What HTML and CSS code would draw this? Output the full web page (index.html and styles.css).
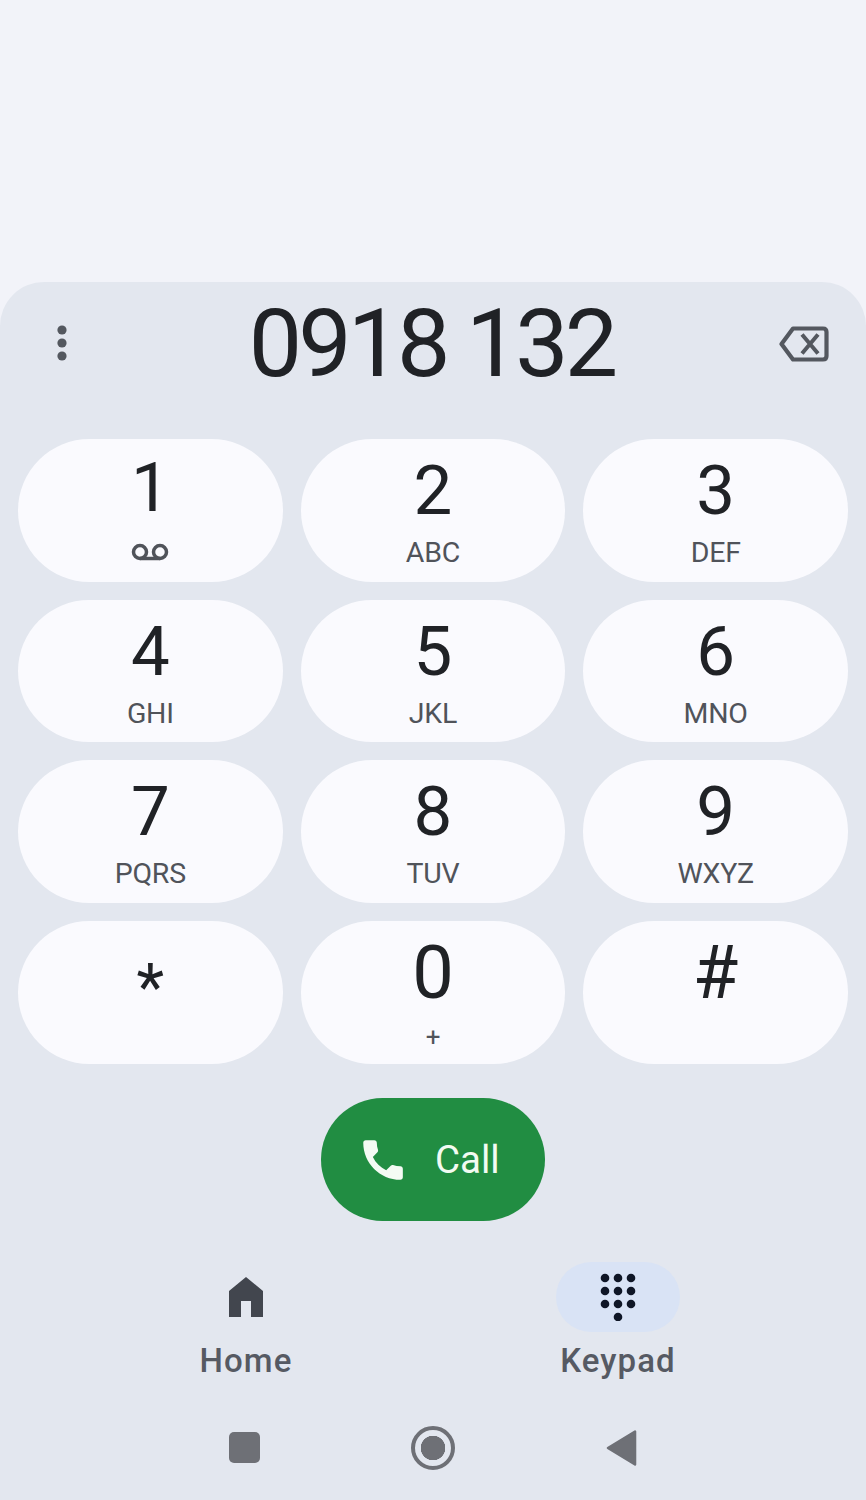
FILE: index.html
```html
<!DOCTYPE html>
<html lang="en">
<head>
<meta charset="utf-8">
<title>Phone keypad</title>
<link rel="stylesheet" href="styles.css">
</head>
<body>
<main class="panel">
  <header class="dial-head">
    <svg class="more" viewBox="0 0 12 40" aria-hidden="true"><circle cx="6" cy="6" r="4.600"/><circle cx="6" cy="19" r="4.600"/><circle cx="6" cy="32" r="4.600"/></svg>
    <div class="number">0918 132</div>
    <svg class="erase" viewBox="0 0 50 36" aria-hidden="true"><path d="M14 2.500H44Q47.500 2.500 47.500 6V30Q47.500 33.500 44 33.500H14L2.500 18Z" fill="none" stroke-width="4.200" stroke-linejoin="round"/><path d="M23 8.500L39 27.500M39 8.500L23 27.500" fill="none" stroke-width="4"/></svg>
  </header>
  <section class="keys">
    <button class="key"><span class="digit one">1</span><svg class="vm" viewBox="0 0 38 18" aria-hidden="true"><circle cx="9" cy="9" r="6.500"/><circle cx="29" cy="9" r="6.500"/><path d="M9 15.500H29"/></svg></button>
    <button class="key"><span class="digit">2</span><span class="sub">ABC</span></button>
    <button class="key"><span class="digit">3</span><span class="sub">DEF</span></button>
    <button class="key"><span class="digit">4</span><span class="sub">GHI</span></button>
    <button class="key"><span class="digit">5</span><span class="sub">JKL</span></button>
    <button class="key"><span class="digit">6</span><span class="sub">MNO</span></button>
    <button class="key"><span class="digit">7</span><span class="sub">PQRS</span></button>
    <button class="key"><span class="digit">8</span><span class="sub">TUV</span></button>
    <button class="key"><span class="digit">9</span><span class="sub">WXYZ</span></button>
    <button class="key"><span class="digit star">*</span></button>
    <button class="key"><span class="digit zero">0</span><span class="sub plus">+</span></button>
    <button class="key"><span class="digit hash">#</span></button>
  </section>
  <div class="call-row">
    <button class="call">
      <svg class="phone" viewBox="0 0 24 24" aria-hidden="true"><path d="M3 4.200C3 3.500 3.500 3 4.200 3H8.300C9 3 9.500 3.500 9.500 4.100C9.500 5.400 9.700 6.600 10.100 7.700C10.200 8.100 10.100 8.500 9.800 8.800L7.600 11C9 13.800 11.200 16 14 17.400L16.200 15.200C16.500 14.900 16.900 14.800 17.300 14.900C18.400 15.300 19.600 15.500 20.900 15.500C21.500 15.500 22 16 22 16.700V20.800C22 21.500 21.500 22 20.800 22C11 22 3 14 3 4.200Z"/></svg>
      <span>Call</span>
    </button>
  </div>
  <nav class="tabs">
    <div class="tab">
      <span class="tab-icon"><svg class="home" viewBox="0 0 34 40" aria-hidden="true"><path d="M17 0L34 14V40H22V24H12V40H0V14Z"/></svg></span>
      <span class="tab-label">Home</span>
    </div>
    <div class="tab">
      <span class="tab-icon active"><svg class="pad" viewBox="0 0 38 48" aria-hidden="true"><circle cx="6" cy="5" r="4.300"/><circle cx="19" cy="5" r="4.300"/><circle cx="32" cy="5" r="4.300"/><circle cx="6" cy="18" r="4.300"/><circle cx="19" cy="18" r="4.300"/><circle cx="32" cy="18" r="4.300"/><circle cx="6" cy="31" r="4.300"/><circle cx="19" cy="31" r="4.300"/><circle cx="32" cy="31" r="4.300"/><circle cx="19" cy="44" r="4.300"/></svg></span>
      <span class="tab-label">Keypad</span>
    </div>
  </nav>
  <footer class="sysbar">
    <span class="sys-square"></span>
    <span class="sys-home"></span>
    <svg class="sys-back" viewBox="0 0 32 38" aria-hidden="true"><path d="M30 2V36L2 19Z" stroke-width="2.500" stroke-linejoin="round"/></svg>
  </footer>
</main>
</body>
</html>
```
FILE: styles.css
```css
* { box-sizing: border-box; }
html, body { margin: 0; height: 100%; }
body {
  width: 866px;
  height: 1500px;
  overflow: hidden;
  padding-top: 282px;
  background: #f2f3f9;
  font-family: Roboto, "Liberation Sans", sans-serif;
}
.panel {
  height: 1218px;
  background: #e3e7ef;
  border-radius: 44px 44px 0 0;
  display: flex;
  flex-direction: column;
}
.dial-head {
  height: 157px;
  padding: 0 37px 33px 55px;
  display: flex;
  align-items: center;
  justify-content: space-between;
}
.more { width: 14px; height: 40px; fill: #54585f; }
.number {
  font-size: 95px;
  line-height: 110px;
  letter-spacing: -4px;
  color: #202226;
  padding-left: 15px;
}
.erase { width: 50px; height: 36px; stroke: #54585f; }
.keys {
  padding: 0 18px;
  display: grid;
  grid-template-columns: repeat(3, 1fr);
  grid-template-rows: repeat(4, 142.700px);
  column-gap: 18px;
  row-gap: 18px;
}
.key {
  border: 0;
  padding: 11px 0 0;
  background: #fafafe;
  border-radius: 72px;
  font-family: inherit;
  display: flex;
  flex-direction: column;
  align-items: center;
}
.digit {
  font-size: 69px;
  line-height: 82px;
  color: #202226;
}
.one { margin-top: -3px; }
.sub {
  margin-top: 4px;
  font-size: 28.500px;
  line-height: 34px;
  color: #50535a;
  letter-spacing: -0.200px;
}
.star { padding-top: 15px; font-size: 64px; }
.zero { font-size: 74px; }
.hash { font-size: 74px; }
.plus { font-size: 26px; margin-top: 6px; }
.vm { width: 38px; height: 18px; margin-top: 14px; fill: none; stroke: #50535a; stroke-width: 3.500; }
.call-row { display: flex; justify-content: center; padding-top: 34px; }
.call {
  width: 224px;
  height: 123px;
  border: 0;
  border-radius: 62px;
  background: #218d42;
  color: #f2fbf2;
  font-family: inherit;
  font-size: 38.500px;
  display: flex;
  align-items: center;
  padding: 0 0 0 36px;
  gap: 28px;
}
.phone { width: 50px; height: 50px; fill: #f4fbf4; }
.tabs {
  display: flex;
  padding: 41px 0 0 126px;
  gap: 132px;
}
.tab { width: 240px; display: flex; flex-direction: column; align-items: center; gap: 9px; }
.tab-icon {
  width: 124px;
  height: 70px;
  border-radius: 35px;
  display: flex;
  align-items: center;
  justify-content: center;
}
.tab-icon.active { background: #d9e3f5; }
.home { width: 36px; height: 40px; fill: #42464e; }
.pad { width: 38px; height: 48px; fill: #0f1626; }
.tab-label { font-size: 33px; line-height: 40px; font-weight: 500; letter-spacing: 1.100px; color: #565a63; }
.sysbar {
  display: flex;
  align-items: center;
  justify-content: center;
  gap: 151px;
  padding-top: 45px;
}
.sys-square { width: 31px; height: 31px; border-radius: 5px; background: #6e7076; }
.sys-home {
  width: 44px;
  height: 44px;
  border-radius: 50%;
  border: 4px solid #6e7076;
  background: radial-gradient(circle, #6e7076 0 12px, transparent 12.500px);
}
.sys-back { width: 31px; height: 38px; fill: #6e7076; stroke: #6e7076; }
```
